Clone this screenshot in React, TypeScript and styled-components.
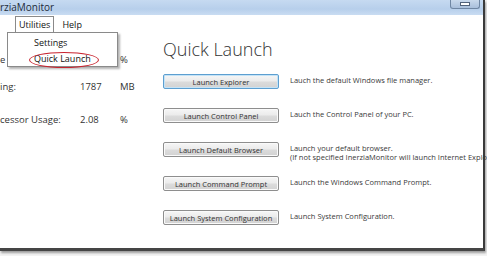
import styled, { createGlobalStyle } from "styled-components";

const Global = createGlobalStyle`
  html, body {
    margin: 0;
    padding: 0;
    background: #f4f4f4;
  }
  * {
    box-sizing: border-box;
  }
`;

const Screen = styled.div`
  width: 487px;
  height: 256px;
  overflow: hidden;
  background: #f2f2f2;
  font-family: "Open Sans", "Noto Sans", sans-serif;
  color: #333;
`;

const Window = styled.div`
  position: relative;
  width: 485px;
  height: 251px;
  background: #fff;
  border-right: 2px solid #3a3a3a;
  border-bottom: 3px solid #454545;
  box-shadow: 1px 2px 2px rgba(0, 0, 0, 0.35);
  display: flex;
  flex-direction: column;
`;

const TitleBar = styled.div`
  height: 15px;
  flex-shrink: 0;
  display: flex;
  align-items: center;
  justify-content: space-between;
  background: linear-gradient(180deg, #c6daf1 0%, #b7cfeb 60%, #c9dcf2 100%);
  font-size: 10px;
  color: #1e2b3a;
`;

const TitleText = styled.span`
  margin-top: -2px;
`;

const MinButton = styled.div`
  width: 30px;
  height: 9px;
  margin-right: 3px;
  align-self: flex-start;
  border: 1px solid #6f86a3;
  border-top: none;
  border-radius: 0 0 3px 3px;
  background: linear-gradient(180deg, #c9d9ec, #a9bfdb);
  display: flex;
  align-items: center;
  justify-content: center;

  &::after {
    content: "";
    width: 8px;
    height: 2px;
    background: #fff;
    border: 1px solid #51627a;
  }
`;

const MenuBar = styled.div`
  height: 17px;
  flex-shrink: 0;
  display: flex;
  align-items: flex-end;
  padding-left: 15px;
  gap: 4px;
  font-size: 9px;
  color: #111;
`;

const MenuItem = styled.div<{ $open?: boolean }>`
  height: 16px;
  padding: 0 3px;
  display: flex;
  align-items: center;
  border: 1px solid ${(p) => (p.$open ? "#8a8a8a" : "transparent")};
  border-bottom: none;
  background: #fff;
  position: relative;
  z-index: 3;
`;

const Dropdown = styled.div`
  position: absolute;
  left: 7px;
  top: 32px;
  width: 111px;
  height: 35px;
  background: #fff;
  border: 1px solid #8a8a8a;
  box-shadow: 2px 2px 2px rgba(0, 0, 0, 0.3);
  z-index: 2;
  display: flex;
  flex-direction: column;
  padding: 3px 0 0 26px;
  gap: 2px;
  font-size: 9px;
  color: #111;
`;

const DropItem = styled.div`
  position: relative;
  height: 14px;
  line-height: 14px;
`;

const RedRing = styled.div`
  position: absolute;
  left: -5px;
  top: 0px;
  width: 70px;
  height: 16px;
  border: 1.5px solid #c8242f;
  border-radius: 50%;
`;

const Body = styled.div`
  flex: 1;
  display: flex;
`;

const Stats = styled.div`
  width: 163px;
  flex-shrink: 0;
  display: grid;
  grid-template-columns: 80px 40px 1fr;
  grid-template-rows: 27px 33px 33px;
  align-content: start;
  padding-top: 21px;
  font-size: 9.5px;
  color: #333;
`;

const StatCell = styled.div`
  white-space: nowrap;
`;

const Launch = styled.div`
  flex: 1;
  display: flex;
  flex-direction: column;
  padding-top: 4px;
`;

const Heading = styled.h1`
  margin: 0 0 12px 0;
  font-size: 18px;
  font-weight: 300;
  color: #333;
  line-height: 26px;
`;

const Row = styled.div`
  display: flex;
  align-items: flex-start;
  gap: 11px;
  height: 34px;
`;

const LaunchButton = styled.button<{ $focused?: boolean }>`
  width: 116px;
  height: 15px;
  flex-shrink: 0;
  padding: 0;
  font-family: inherit;
  font-size: 7.5px;
  color: #333;
  border: 1px solid ${(p) => (p.$focused ? "#5d9fd0" : "#8e8e8e")};
  border-radius: 2px;
  background: linear-gradient(180deg, #f6f6f6 0%, #ebebeb 48%, #dcdcdc 52%, #d2d2d2 100%);
  box-shadow: ${(p) => (p.$focused ? "0 0 0 1px #c4e3f7 inset" : "0 0 0 1px #fafafa inset")};
`;

const Description = styled.div`
  font-size: 7.5px;
  line-height: 9px;
  color: #3a3a3a;
  white-space: nowrap;
  padding-top: 2px;
`;

const stats = [
  { label: "e", value: "", unit: "%" },
  { label: "ing:", value: "1787", unit: "MB" },
  { label: "cessor Usage:", value: "2.08", unit: "%" },
];

const actions = [
  { name: "Launch Explorer", text: ["Lauch the default Windows file manager."] },
  { name: "Launch Control Panel", text: ["Lauch the Control Panel of your PC."] },
  {
    name: "Launch Default Browser",
    text: [
      "Launch your default browser.",
      "(If not specified InerziaMonitor will launch Internet Explorer)",
    ],
  },
  { name: "Launch Command Prompt", text: ["Launch the Windows Command Prompt."] },
  { name: "Launch System Configuration", text: ["Launch System Configuration."] },
];

function App() {
  return (
    <>
      <Global />
      <Screen>
        <Window>
          <TitleBar>
            <TitleText>rziaMonitor</TitleText>
            <MinButton />
          </TitleBar>
          <MenuBar>
            <MenuItem $open>Utilities</MenuItem>
            <MenuItem>Help</MenuItem>
          </MenuBar>
          <Dropdown>
            <DropItem>Settings</DropItem>
            <DropItem>
              Quick Launch
              <RedRing />
            </DropItem>
          </Dropdown>
          <Body>
            <Stats>
              {stats.map((s) => (
                <>
                  <StatCell key={s.label}>{s.label}</StatCell>
                  <StatCell>{s.value}</StatCell>
                  <StatCell>{s.unit}</StatCell>
                </>
              ))}
            </Stats>
            <Launch>
              <Heading>Quick Launch</Heading>
              {actions.map((a, i) => (
                <Row key={a.name}>
                  <LaunchButton $focused={i === 0}>{a.name}</LaunchButton>
                  <Description>
                    {a.text.map((t) => (
                      <div key={t}>{t}</div>
                    ))}
                  </Description>
                </Row>
              ))}
            </Launch>
          </Body>
        </Window>
      </Screen>
    </>
  );
}

export default App;
